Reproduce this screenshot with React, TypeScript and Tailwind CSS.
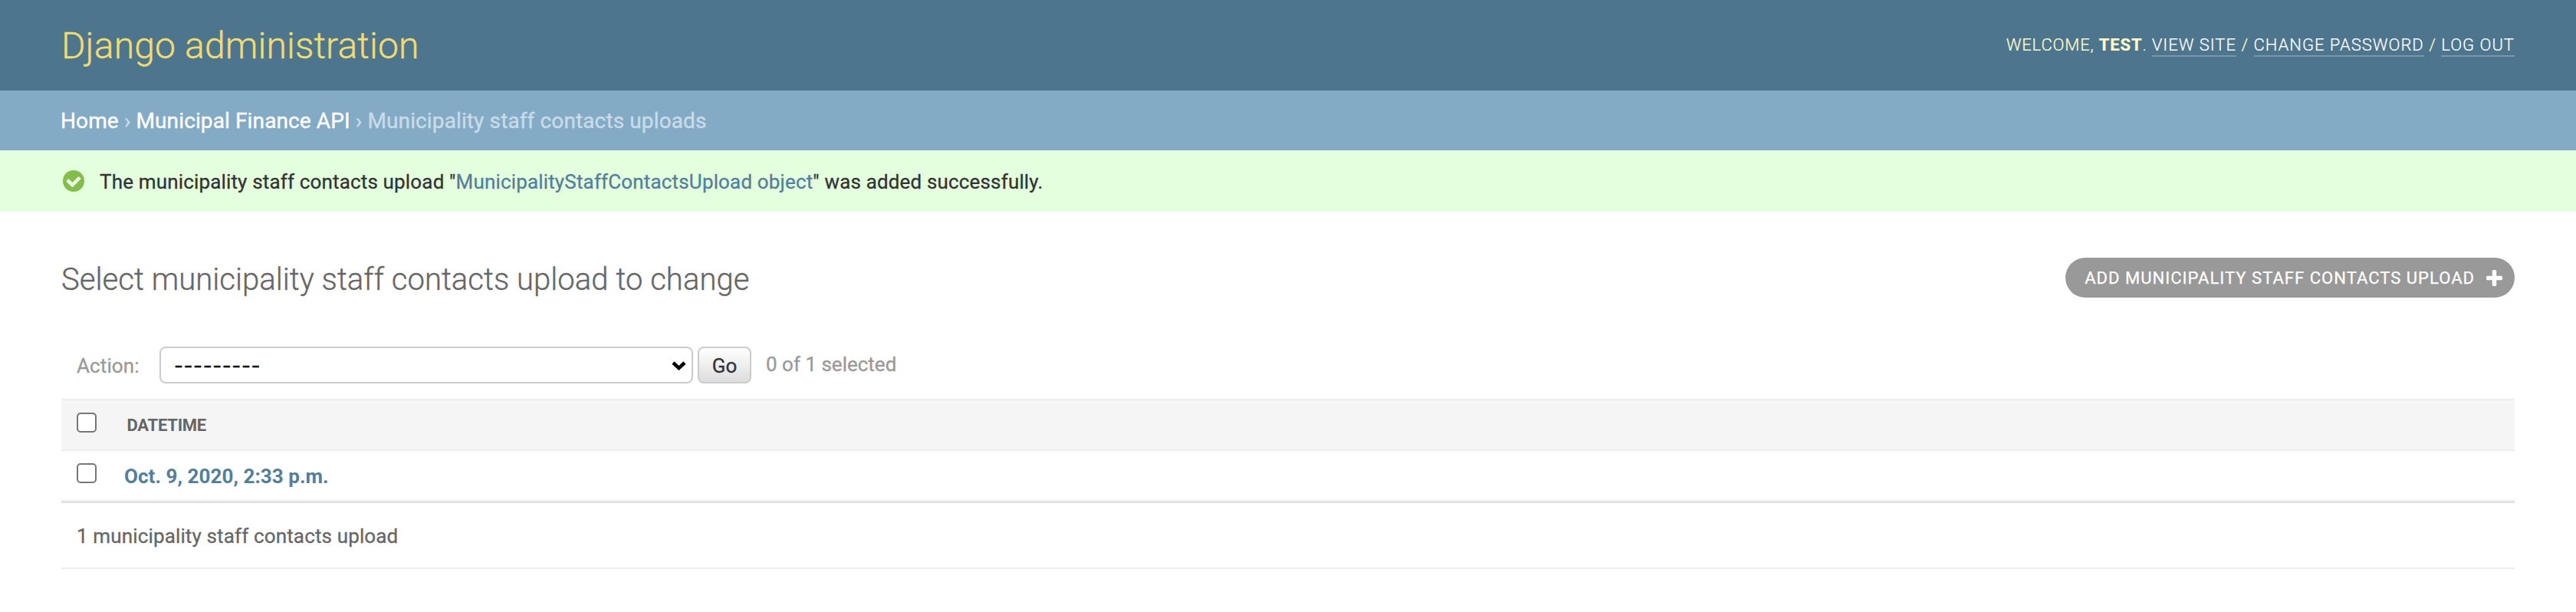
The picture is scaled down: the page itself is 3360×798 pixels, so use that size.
import React from "react";

function UserTools() {
  const link = "border-b-2 border-white/25 pb-px text-white";
  return (
    <div className="mb-px text-[22px] font-light uppercase leading-[25px] tracking-[1px] text-[#ffffcc] [-webkit-text-stroke:0.2px]">
      <span className="tracking-[0.85px]">
        Welcome, <strong className="font-bold">Test</strong>.{" "}
      </span>
      <a className={link}>View site</a> / <a className={link}>Change password</a> /{" "}
      <a className={link}>Log out</a>
    </div>
  );
}

function Check() {
  return (
    <svg className="mr-5 h-7 w-7 shrink-0" viewBox="128 128 1536 1536">
      <circle cx="896" cy="896" r="768" fill="#84bd4b" />
      <path
        d="M1412 734q0-28-18-46l-91-90q-19-19-45-19t-45 19l-408 407-226-226q-19-19-45-19t-45 19l-91 90q-18 18-18 46 0 27 18 45l362 362q19 19 45 19 27 0 46-19l543-543q18-18 18-45z"
        fill="#e9fbe2"
      />
    </svg>
  );
}

function Checkbox() {
  return <span className="block h-[26px] w-[26px] rounded-[5px] border-2 border-[#767676] bg-white" />;
}

export default function App() {
  return (
    <div className="h-[798px] w-[3360px] bg-white font-['Roboto',sans-serif] text-[26px] text-[#333]">
      <header className="flex h-[118px] items-center justify-between bg-[#4e758e] px-20">
        <h1 className="pt-px text-[48px] font-light leading-[56px] tracking-[0.17px] text-[#f1dc70] [-webkit-text-stroke:0.4px]">
          Django administration
        </h1>
        <UserTools />
      </header>
      <nav className="flex h-[78px] items-center bg-[#84abc5] px-[79px] pt-[2px] text-[28px] leading-[32px] tracking-[0.12px] text-[#c9dce8] [-webkit-text-stroke:0.35px]">
        <div>
          <a className="text-white">Home</a> › <a className="text-white">Municipal Finance API</a> ›
          {" "}Municipality staff contacts uploads
        </div>
      </nav>
      <div className="flex h-20 items-center bg-[#e3ffde] px-[82px]">
        <Check />
        <p className="pt-[2px] leading-[30px] tracking-[0.16px] [-webkit-text-stroke:0.3px]">
          The municipality staff contacts upload "
          <a className="text-[#537f9b]">MunicipalityStaffContactsUpload object</a>" was added successfully.
        </p>
      </div>
      <main className="px-20 pt-[60px]">
        <div className="flex h-[116px] items-start justify-between">
          <h2 className="pt-[5px] text-[40px] font-light leading-[47px] tracking-[0.05px] text-[#666] [-webkit-text-stroke:0.35px]">
            Select municipality staff contacts upload to change
          </h2>
          <a className="flex h-[52px] items-center rounded-full bg-[#999] pl-[25px] pr-4 pt-px text-[22px] leading-[25px] tracking-[1.03px] text-white [-webkit-text-stroke:0.25px]">
            ADD MUNICIPALITY STAFF CONTACTS UPLOAD
            <svg className="ml-[15px] h-[21px] w-[21px]" viewBox="0 0 21 21" fill="white">
              <rect x="7.750" y="0" width="5.500" height="21" rx="1.500" />
              <rect x="0" y="7.750" width="21" height="5.500" rx="1.500" />
            </svg>
          </a>
        </div>
        <div className="flex h-[68px] items-start pl-5 tracking-[0.1px] text-[#999] [-webkit-text-stroke:0.3px]">
          <label className="w-[108px] pt-[10px] leading-[30px]">Action:</label>
          <div className="flex h-12 w-[696px] items-center justify-between rounded-lg border-2 border-[#ccc] bg-white pl-[17px] pr-[7px] pt-[2px] text-black">
            <span className="font-['Inter',sans-serif] leading-8 tracking-[0.6px]">---------</span>
            <svg className="h-3 w-[19px]" viewBox="0 0 19 12" fill="none" stroke="black" strokeWidth="4.500">
              <path d="M2 2 L9.500 9 L17 2" />
            </svg>
          </div>
          <button className="ml-[6px] h-12 w-[70px] rounded-lg border-2 border-[#ccc] bg-linear-to-b from-white to-[#ddd] pt-[2px] leading-[30px] text-[#333]">
            Go
          </button>
          <span className="ml-[19px] pt-2 leading-[30px] tracking-normal">0 of 1 selected</span>
        </div>
        <div className="flex h-[68px] items-start border-y-2 border-[#eee] bg-[#f5f5f5] pl-5 pt-4">
          <Checkbox />
          <span className="ml-[39.5px] pt-1 text-[22px] font-bold leading-[25px] tracking-[-0.25px] text-[#666]">
            DATETIME
          </span>
        </div>
        <div className="flex h-[66px] items-start border-b-2 border-[#eee] pl-5 pt-4">
          <Checkbox />
          <a className="ml-9 pt-[2px] font-bold leading-[30px] tracking-[0.06px] text-[#537f9b]">
            Oct. 9, 2020, 2:33 p.m.
          </a>
        </div>
        <div className="flex h-[88px] items-center border-b-2 border-t-2 border-b-[#eee] border-t-[#ddd] pl-5 pt-[2px] leading-[30px] tracking-[0.14px] text-[#666] [-webkit-text-stroke:0.3px]">
          1 municipality staff contacts upload
        </div>
      </main>
    </div>
  );
}
